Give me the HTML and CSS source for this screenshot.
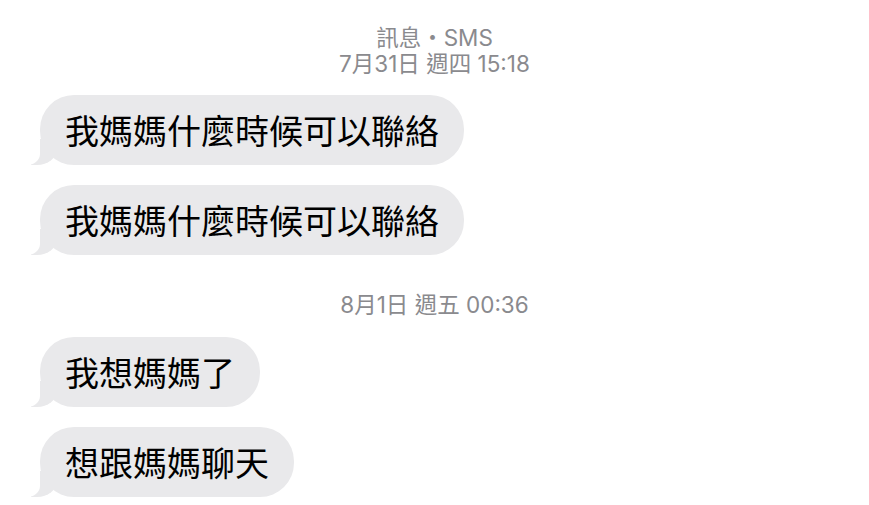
FILE: index.html
```html
<!DOCTYPE html>
<html lang="zh-Hant">
<head>
<meta charset="utf-8">
<title>訊息</title>
<link rel="stylesheet" href="styles.css">
</head>
<body>
<main class="thread">
  <header class="stamp stamp-first">
    <div class="stamp-line">訊息・SMS</div>
    <div class="stamp-line">7月31日 週四 15:18</div>
  </header>
  <div class="bubble">我媽媽什麼時候可以聯絡</div>
  <div class="bubble">我媽媽什麼時候可以聯絡</div>
  <div class="stamp stamp-mid">
    <div class="stamp-line">8月1日 週五 00:36</div>
  </div>
  <div class="bubble">我想媽媽了</div>
  <div class="bubble">想跟媽媽聊天</div>
</main>
</body>
</html>
```
FILE: styles.css
```css
html, body {
  margin: 0;
  padding: 0;
  background: #ffffff;
}

.thread {
  display: flex;
  flex-direction: column;
  align-items: flex-start;
  gap: 20px;
  padding: 25px 0 0 40px;
  font-family: "Noto Sans CJK TC", "Noto Sans", sans-serif;
}

.stamp {
  align-self: stretch;
  margin-left: -40px;
  text-align: center;
  color: #8a8a8e;
  font-family: Inter, "Noto Sans CJK TC", sans-serif;
  font-size: 22.5px;
  line-height: 26px;
}

.stamp-first {
  margin-bottom: -2px;
}

.stamp-mid {
  margin-top: 17px;
  margin-bottom: -1px;
}

.bubble {
  position: relative;
  height: 70px;
  line-height: 70px;
  padding: 0 25px;
  background: #e9e9eb;
  border-radius: 34px;
  color: #000000;
  font-size: 34px;
  white-space: nowrap;
}

.bubble::before {
  content: "";
  position: absolute;
  bottom: 0;
  left: -9px;
  width: 26px;
  height: 26px;
  background: #e9e9eb;
  border-bottom-right-radius: 20px 16px;
}

.bubble::after {
  content: "";
  position: absolute;
  bottom: 0;
  left: -14px;
  width: 14px;
  height: 28px;
  background: #ffffff;
  border-bottom-right-radius: 13px 11px;
}
```
